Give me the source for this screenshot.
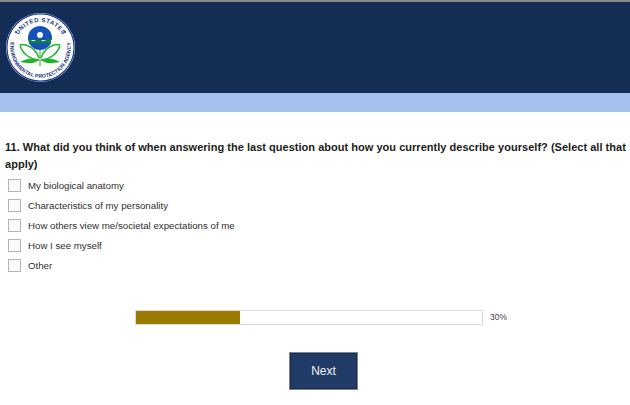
<style>
:global(body){margin:0;background:#fff;}
.page{width:630px;height:405px;overflow:hidden;font-family:"Liberation Sans",Arial,sans-serif;color:#222;}
.top{height:93px;background:#132d55;border-top:2px solid #8a8a8a;box-sizing:border-box;padding:11px 0 0 6px;}
.logo{display:block;width:69px;height:69px;}
.band{height:19px;background:#a4c1ee;}
.q{margin:27px 0 0;padding:0 0 0 5px;font-size:11px;letter-spacing:.025px;line-height:17px;font-weight:bold;color:#1c1c1c;}
.opts{list-style:none;margin:2px 0 0;padding:0 0 0 8px;}
.opts li{display:flex;align-items:center;height:20.2px;font-size:9.7px;color:#2e2e2e;}
.box{width:11px;height:11px;border:1px solid #b5b5b5;background:#fafafa;margin-right:7px;box-sizing:content-box;}
.prog{display:flex;align-items:center;margin:34px 0 0 135px;}
.bar{width:346px;height:13px;border:1px solid #dcdcdc;background:#fff;}
.fill{height:100%;background:#9b7a00;}
.pct{margin-left:7px;font-size:8.5px;color:#444;}
.btn-row{display:flex;justify-content:flex-start;margin:27px 0 0 289px;}
.next{width:69px;height:38px;background:#203c66;border:1px solid #7d8798;color:#f2f2f2;font:12px "Liberation Sans",Arial,sans-serif;box-sizing:border-box;padding:0;box-shadow:inset 0 0 0 1px #152b4f;}
.seal-top{font:bold 6px "Liberation Sans",Arial,sans-serif;letter-spacing:.5px;fill:#17367f;}
.seal-bot{font:bold 5.2px "Liberation Sans",Arial,sans-serif;letter-spacing:.05px;fill:#17367f;}
</style>

<div class="page">
  <header class="top">
    <svg class="logo" viewBox="0 0 69 69" aria-label="EPA seal">
      <defs>
        <path id="arcTop" d="M9 34.5 A25.5 25.5 0 0 1 60 34.5"/>
        <path id="arcBot" d="M5 28 A30.2 30.2 0 1 0 64 28"/>
        <clipPath id="globe"><circle cx="34" cy="25" r="12"/></clipPath>
      </defs>
      <circle cx="34.5" cy="34.5" r="34.5" fill="#fff"/>
      <circle cx="34.5" cy="34.5" r="33.6" fill="none" stroke="#1b3f94" stroke-width="1.2"/>
      <text class="seal-top"><textPath href="#arcTop" startOffset="50%" text-anchor="middle">UNITED STATES</textPath></text>
      <text class="seal-bot"><textPath href="#arcBot" startOffset="50%" text-anchor="middle">ENVIRONMENTAL PROTECTION AGENCY</textPath></text>
      <circle cx="10" cy="19" r="1" fill="#1b3f94"/>
      <circle cx="59" cy="19" r="1" fill="#1b3f94"/>
      <g clip-path="url(#globe)">
        <rect x="20" y="12" width="28" height="15" fill="#1553b8"/>
        <path d="M20 27 q3-2 5 0 t5 0 t5 0 t5 0 t5 0 V30.5 H20Z" fill="#0f7f3a"/>
        <rect x="20" y="30" width="28" height="8" fill="#1553b8"/>
      </g>
      <circle cx="34" cy="22" r="3" fill="#fff"/>
      <path d="M14 32 C21 30 30 36 33 45 M14 32 C16 41 24 46 33 47" fill="none" stroke="#20b32a" stroke-width="1.5"/>
      <path d="M54 32 C47 30 38 36 35 45 M54 32 C52 41 44 46 35 47" fill="none" stroke="#20b32a" stroke-width="1.5"/>
      <path d="M14 49 Q24 43 33 47 Q28 52 14 49Z M54 49 Q44 43 35 47 Q40 52 54 49Z" fill="#20b32a"/>
      <path d="M34 37 V53" stroke="#20b32a" stroke-width="1"/>
    </svg>
  </header>
  <div class="band"></div>
  <p class="q">11. What did you think of when answering the last question about how you currently describe yourself? (Select all that apply)</p>
  <ul class="opts">
    <li><span class="box"></span>My biological anatomy</li>
    <li><span class="box"></span>Characteristics of my personality</li>
    <li><span class="box"></span>How others view me/societal expectations of me</li>
    <li><span class="box"></span>How I see myself</li>
    <li><span class="box"></span>Other</li>
  </ul>
  <div class="prog">
    <div class="bar"><div class="fill" style="width:30%"></div></div>
    <span class="pct">30%</span>
  </div>
  <div class="btn-row"><button class="next">Next</button></div>
</div>
